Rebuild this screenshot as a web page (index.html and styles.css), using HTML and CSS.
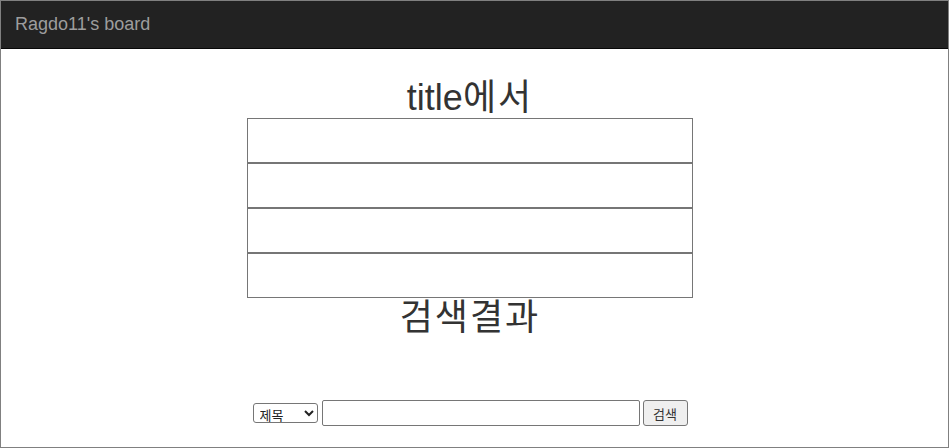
FILE: index.html
```html
<!DOCTYPE html>
<html lang="ko">
<head>
    <meta charset="UTF-8">
    <meta name="viewport" content="width=device-width, initial-scale=1.0">
    <title>Ragdo11's board</title>
    <link rel="stylesheet" href="styles.css">
</head>
<body>
    <div class="frame">
        <nav class="navbar">
            <a class="brand" href="#">Ragdo11's board</a>
        </nav>

        <div class="main">
            <h2 class="heading">title<span class="ko">에서</span></h2>

            <div class="board">
                <div class="board-row"></div>
                <div class="board-row"></div>
                <div class="board-row"></div>
                <div class="board-row"></div>
            </div>

            <h2 class="heading ko">검색결과</h2>

            <form class="search">
                <select class="search-type" name="type">
                    <option value="title">제목</option>
                    <option value="content">내용</option>
                    <option value="writer">작성자</option>
                </select>
                <input class="search-input" type="text" name="keyword">
                <button class="search-button" type="submit">검색</button>
            </form>
        </div>
    </div>
</body>
</html>
```

FILE: styles.css
```css
* {
    box-sizing: border-box;
    margin: 0;
    padding: 0;
}

body {
    font-family: 'Liberation Sans', Arial, 'Noto Sans CJK KR', sans-serif;
    color: #333;
    background: #fff;
}

.frame {
    height: 448px;
    border: 1px solid #808080;
    overflow: hidden;
}

/* top bar */
.navbar {
    height: 48px;
    background: #222;
    border-bottom: 1px solid #080808;
    padding-left: 14px;
}

.brand {
    display: block;
    line-height: 46px;
    font-size: 18px;
    color: #9d9d9d;
    text-decoration: none;
}

.main {
    width: 938px;
    text-align: center;
}

.heading {
    font-size: 36px;
    font-weight: normal;
    line-height: 40px;
    color: #333;
}

.main > .heading:first-child {
    margin-top: 29px;
}

/* hangul runs a bit wider in the original font */
.ko {
    letter-spacing: 2px;
}

.board {
    width: 446px;
    margin: 0 auto;
}

.board-row {
    height: 45px;
    border: 1px solid #767676;
}

/* search form */
.search {
    display: flex;
    justify-content: center;
    align-items: center;
    margin-top: 62px;
    font-family: 'Noto Sans CJK KR', 'Liberation Sans', sans-serif;
}

.search-type {
    width: 65px;
    height: 20px;
    margin-right: 4px;
    padding-left: 2px;
    font-family: inherit;
    font-size: 13px;
    border: 1px solid #767676;
    border-radius: 3px;
    background: #fff;
    color: #222;
}

.search-input {
    width: 318px;
    height: 26px;
    margin-right: 3px;
    border: 1px solid #767676;
    border-radius: 2px;
    font-size: 13px;
}

.search-button {
    width: 45px;
    height: 26px;
    font-family: inherit;
    font-size: 13px;
    color: #333;
    background: #efefef;
    border: 1px solid #767676;
    border-radius: 3px;
}
```
